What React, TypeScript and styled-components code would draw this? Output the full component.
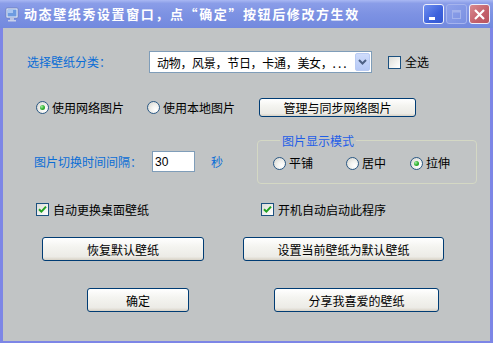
import React from 'react';
import styled, { createGlobalStyle } from 'styled-components';

const Global = createGlobalStyle`
  html, body { margin: 0; padding: 0; background: #c1c4c5; }
  body { font-family: "Noto Sans CJK SC", "Liberation Sans", sans-serif; font-size: 12px; }
  * { box-sizing: border-box; }
`;

const Window = styled.div`
  width: 493px;
  height: 343px;
  display: flex;
  flex-direction: column;
  overflow: hidden;
`;

const TitleBar = styled.div`
  height: 28px;
  flex: none;
  display: flex;
  align-items: center;
  padding: 0 3px 0 5px;
  background: linear-gradient(to bottom, #a9b8f3 0%, #8a9de8 12%, #7d92e3 50%, #7289de 100%);
`;

const TitleText = styled.div`
  margin-left: 4px;
  color: #ffffff;
  font-size: 13px;
  font-weight: bold;
  letter-spacing: 1.6px;
  line-height: 14px;
  white-space: nowrap;
`;

const TitleButtons = styled.div`
  margin-left: auto;
  display: flex;
  gap: 2px;
  align-items: center;
`;

const TitleBtn = styled.div<{ $kind: 'min' | 'max' | 'close' }>`
  width: 21px;
  height: 20px;
  border-radius: 3px;
  border: 1px solid ${p => (p.$kind === 'max' ? '#a6b4ee' : '#eef0fb')};
  display: flex;
  align-items: center;
  justify-content: center;
  background: ${p =>
    p.$kind === 'min'
      ? 'linear-gradient(135deg, #6f8ff0 0%, #3d62dc 60%, #3458d2 100%)'
      : p.$kind === 'max'
      ? 'linear-gradient(135deg, #8fa2ea 0%, #7a90e2 100%)'
      : 'linear-gradient(135deg, #d98a90 0%, #c3606a 60%, #b8545f 100%)'};
`;

const Client = styled.div`
  flex: 1;
  display: flex;
  flex-direction: column;
  background: #c1c4c5;
  border-left: 3px solid #7d86e6;
  border-right: 3px solid #7d86e6;
  border-bottom: 2px solid #7d86e6;
  padding-top: 23px;
`;

const Row = styled.div<{ $mt?: number; $h?: number; $align?: string }>`
  display: flex;
  align-items: ${p => p.$align ?? 'center'};
  margin-top: ${p => p.$mt ?? 0}px;
  height: ${p => (p.$h ? `${p.$h}px` : 'auto')};
  flex: none;
`;

const Cell = styled.div<{ $w?: number; $ml?: number }>`
  flex: none;
  display: flex;
  align-items: center;
  width: ${p => (p.$w ? `${p.$w}px` : 'auto')};
  margin-left: ${p => p.$ml ?? 0}px;
`;

const BlueLabel = styled.span`
  color: #0a6dd6;
  font-size: 12px;
  line-height: 14px;
  white-space: nowrap;
`;

const Text = styled.span`
  color: #000;
  font-size: 12px;
  line-height: 14px;
  white-space: nowrap;
`;

const Combo = styled.div`
  width: 223px;
  height: 22px;
  background: #fff;
  border: 1px solid #7f9db9;
  display: flex;
  align-items: center;
  padding-left: 7px;
`;

const ComboText = styled.span`
  font-size: 12px;
  color: #000;
  white-space: nowrap;
  letter-spacing: -0.3px;
`;

const DropBtn = styled.div`
  margin-left: auto;
  margin-right: 1px;
  width: 15px;
  height: 18px;
  border-radius: 2px;
  background: linear-gradient(to bottom, #cfdcfb 0%, #b6c9f6 100%);
  border: 1px solid #b9cbf3;
  display: flex;
  align-items: center;
  justify-content: center;
`;

const Box = styled.span`
  width: 13px;
  height: 13px;
  flex: none;
  border: 1px solid #1c5180;
  background: linear-gradient(135deg, #dcdcd7 0%, #f6f6f4 70%, #ffffff 100%);
  display: inline-flex;
  align-items: center;
  justify-content: center;
  margin-right: 4px;
`;

const Circle = styled.span<{ $checked?: boolean }>`
  width: 13px;
  height: 13px;
  flex: none;
  border-radius: 50%;
  border: 1px solid #2a5884;
  background: radial-gradient(circle at 70% 70%, #ffffff 0%, #f2f2ef 40%, #d2d2cc 100%);
  display: inline-flex;
  align-items: center;
  justify-content: center;
  margin-right: 3px;
  &::after {
    content: '';
    display: ${p => (p.$checked ? 'block' : 'none')};
    width: 5px;
    height: 5px;
    border-radius: 50%;
    background: radial-gradient(circle at 35% 35%, #a6eea6 0%, #31b331 50%, #1d8c1d 100%);
  }
`;

const Button = styled.div<{ $w: number; $ml: number }>`
  flex: none;
  width: ${p => p.$w}px;
  height: 100%;
  margin-left: ${p => p.$ml}px;
  border: 1px solid #003c74;
  border-radius: 3px;
  background: linear-gradient(to bottom, #ffffff 0%, #f4f4f0 40%, #ecebe6 85%, #d8d2c6 100%);
  display: flex;
  align-items: center;
  justify-content: center;
  font-size: 12px;
  color: #000;
  white-space: nowrap;
`;

const LeftPart = styled.div`
  width: 254px;
  flex: none;
  display: flex;
  align-items: center;
  padding-left: 31px;
  padding-top: 17px;
`;

const TextInput = styled.div`
  width: 43px;
  height: 21px;
  background: #fff;
  border: 1px solid #7f9db9;
  display: flex;
  align-items: center;
  padding-left: 2px;
  font-family: "Liberation Sans", sans-serif;
  font-size: 12px;
  color: #000;
`;

const Group = styled.fieldset`
  width: 220px;
  margin: 0;
  padding: 9px 0 13px 15px;
  border: 1px solid #d4d8c4;
  border-radius: 4px;
  display: flex;
  align-items: center;
`;

const Legend = styled.legend`
  margin-left: 7px;
  padding: 0 2px;
  color: #1f5ee8;
  font-size: 12px;
  line-height: 13px;
`;

const Check = () => (
  <svg width="9" height="9" viewBox="0 0 9 9">
    <path d="M1 4.2 L3.4 6.6 L8 1.6" fill="none" stroke="#21a121" strokeWidth="2" />
  </svg>
);

const Chevron = () => (
  <svg width="9" height="6" viewBox="0 0 9 6">
    <path d="M1 1 L4.5 4.5 L8 1" fill="none" stroke="#4d6185" strokeWidth="2" />
  </svg>
);

const MonitorIcon = () => (
  <svg width="15" height="15" viewBox="0 0 15 15">
    <rect x="1" y="1" width="12" height="10" rx="1" fill="#e8eefc" stroke="#6d7fb8" strokeWidth="0.8" />
    <rect x="2.5" y="2.5" width="9" height="7" fill="#6d9be0" />
    <rect x="3" y="3" width="5" height="3" fill="#a9c6f2" />
    <rect x="5" y="11" width="4" height="2" fill="#b8c3e3" />
    <rect x="3" y="13" width="8" height="1.5" fill="#c9d1ea" />
  </svg>
);

export default function App() {
  return (
    <>
      <Global />
      <Window>
        <TitleBar>
          <MonitorIcon />
          <TitleText>动态壁纸秀设置窗口，点“确定”按钮后修改方生效</TitleText>
          <TitleButtons>
            <TitleBtn $kind="min">
              <svg width="13" height="13" viewBox="0 0 13 13">
                <rect x="2" y="9" width="6" height="3" fill="#fff" />
              </svg>
            </TitleBtn>
            <TitleBtn $kind="max">
              <svg width="13" height="13" viewBox="0 0 13 13">
                <rect x="2.5" y="2.5" width="8" height="8" fill="none" stroke="#a3b2ec" strokeWidth="1" />
                <rect x="2.5" y="2.5" width="8" height="2" fill="#a3b2ec" />
              </svg>
            </TitleBtn>
            <TitleBtn $kind="close">
              <svg width="13" height="13" viewBox="0 0 13 13">
                <path d="M2 2 L11 11 M11 2 L2 11" stroke="#fff" strokeWidth="2.2" />
              </svg>
            </TitleBtn>
          </TitleButtons>
        </TitleBar>
        <Client>
          <Row $h={22}>
            <Cell $ml={24} $w={122}>
              <BlueLabel>选择壁纸分类：</BlueLabel>
            </Cell>
            <Combo>
              <ComboText>动物，风景，节日，卡通，美女，. . .</ComboText>
              <DropBtn>
                <Chevron />
              </DropBtn>
            </Combo>
            <Cell $ml={16}>
              <Box />
              <Text>全选</Text>
            </Cell>
          </Row>

          <Row $mt={25} $h={19}>
            <Cell $ml={33} $w={111}>
              <Circle $checked />
              <Text>使用网络图片</Text>
            </Cell>
            <Cell $w={112}>
              <Circle />
              <Text>使用本地图片</Text>
            </Cell>
            <Button $w={157} $ml={0}>管理与同步网络图片</Button>
          </Row>

          <Row $mt={17} $align="flex-start">
            <LeftPart>
              <Cell $w={118}>
                <BlueLabel>图片切换时间间隔：</BlueLabel>
              </Cell>
              <TextInput>30</TextInput>
              <Cell $ml={16}>
                <BlueLabel>秒</BlueLabel>
              </Cell>
            </LeftPart>
            <Group>
              <Legend>图片显示模式</Legend>
              <Cell $w={73}>
                <Circle />
                <Text>平铺</Text>
              </Cell>
              <Cell $w={64}>
                <Circle />
                <Text>居中</Text>
              </Cell>
              <Cell>
                <Circle $checked />
                <Text>拉伸</Text>
              </Cell>
            </Group>
          </Row>

          <Row $mt={19} $h={13}>
            <Cell $ml={33} $w={225}>
              <Box>
                <Check />
              </Box>
              <Text>自动更换桌面壁纸</Text>
            </Cell>
            <Cell>
              <Box>
                <Check />
              </Box>
              <Text>开机自动启动此程序</Text>
            </Cell>
          </Row>

          <Row $mt={21} $h={24}>
            <Button $w={162} $ml={39}>恢复默认壁纸</Button>
            <Button $w={201} $ml={39}>设置当前壁纸为默认壁纸</Button>
          </Row>

          <Row $mt={27} $h={24}>
            <Button $w={102} $ml={84}>确定</Button>
            <Button $w={165} $ml={85}>分享我喜爱的壁纸</Button>
          </Row>
        </Client>
      </Window>
    </>
  );
}
